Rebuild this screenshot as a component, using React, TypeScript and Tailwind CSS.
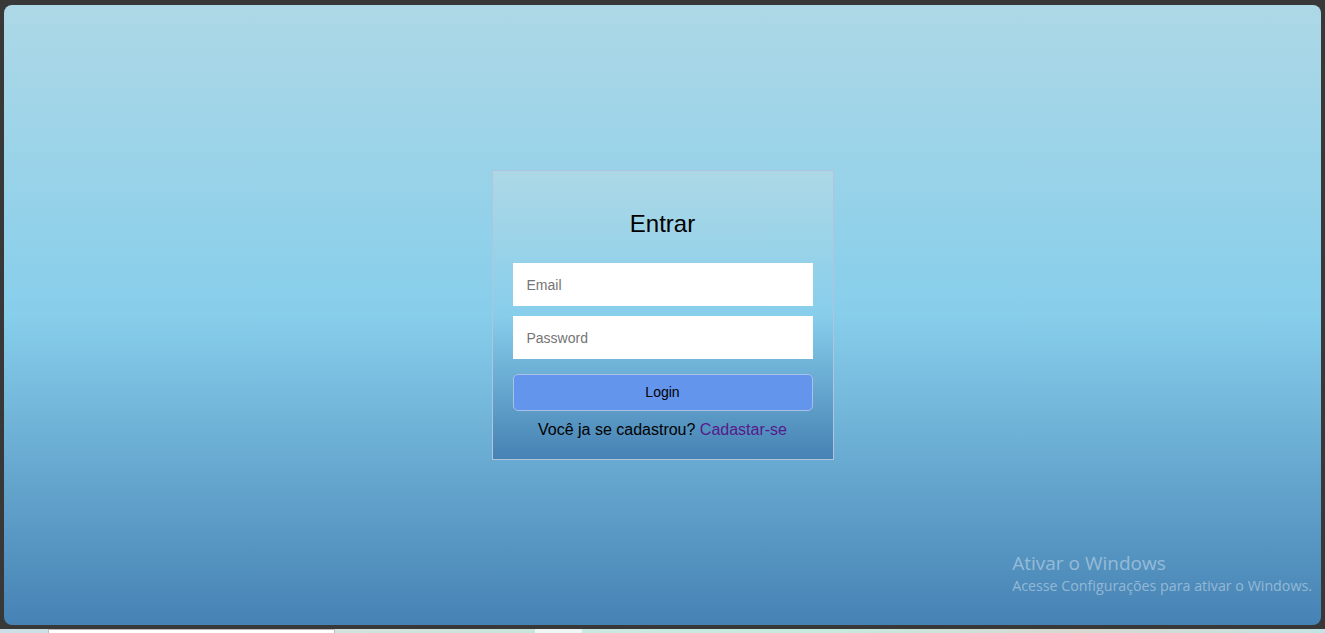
export default function App() {
  return (
    <div className="flex h-[633px] w-full flex-col overflow-hidden bg-[#383838] font-['Liberation_Sans',Arial,sans-serif]">
      <div className="relative mx-[4px] mt-[5px] flex h-[620px] items-center justify-center rounded-lg bg-[linear-gradient(#add8e6,#87ceeb,#4682b4)]">
        <div className="flex w-[342px] flex-col border border-[#b0c4de] bg-[linear-gradient(#add8e6,#87ceeb,#4682b4)] px-5 pb-5 pt-5">
          <h2 className="mt-[19px] h-[28px] text-center text-[24px] leading-[28px] text-black">Entrar</h2>
          <input
            className="mt-[25px] h-[43px] w-full bg-white px-[14px] text-[14px] text-black outline-none placeholder:text-[#757575]"
            placeholder="Email"
            type="email"
          />
          <input
            className="mt-[10px] h-[43px] w-full bg-white px-[14px] text-[14px] text-black outline-none placeholder:text-[#757575]"
            placeholder="Password"
            type="password"
          />
          <button className="mt-[15px] h-[37px] w-full rounded-[5px] border border-[#a9c1e8] bg-[#6495ed] text-[14px] text-black">
            Login
          </button>
          <p className="mt-[10px] text-center text-[16px] leading-[18px] text-black">
            Você ja se cadastrou?{" "}
            <a className="text-[#551a8b]" href="#">
              Cadastar-se
            </a>
          </p>
        </div>

        <div className="pointer-events-none absolute bottom-[29px] right-[9px] font-['Open_Sans','Noto_Sans',sans-serif] text-white/40">
          <div className="text-[19px] leading-[26px]">Ativar o Windows</div>
          <div className="text-[14.25px] leading-[20px]">Acesse Configurações para ativar o Windows.</div>
        </div>
      </div>

      <div className="mt-[4px] flex h-[4px] w-full">
        <div className="w-[48px] bg-[#cddfe6]" />
        <div className="w-[287px] border-x border-t border-[#bbb] bg-white" />
        <div className="w-[200px] bg-[linear-gradient(90deg,#d4e2de,#c8e4da)]" />
        <div className="w-[47px] bg-[#eef6f6]" />
        <div className="flex-1 bg-[linear-gradient(90deg,#c9e8e2,#c6eadf,#d8d8d0,#c3e4e4)]" />
      </div>
    </div>
  );
}
